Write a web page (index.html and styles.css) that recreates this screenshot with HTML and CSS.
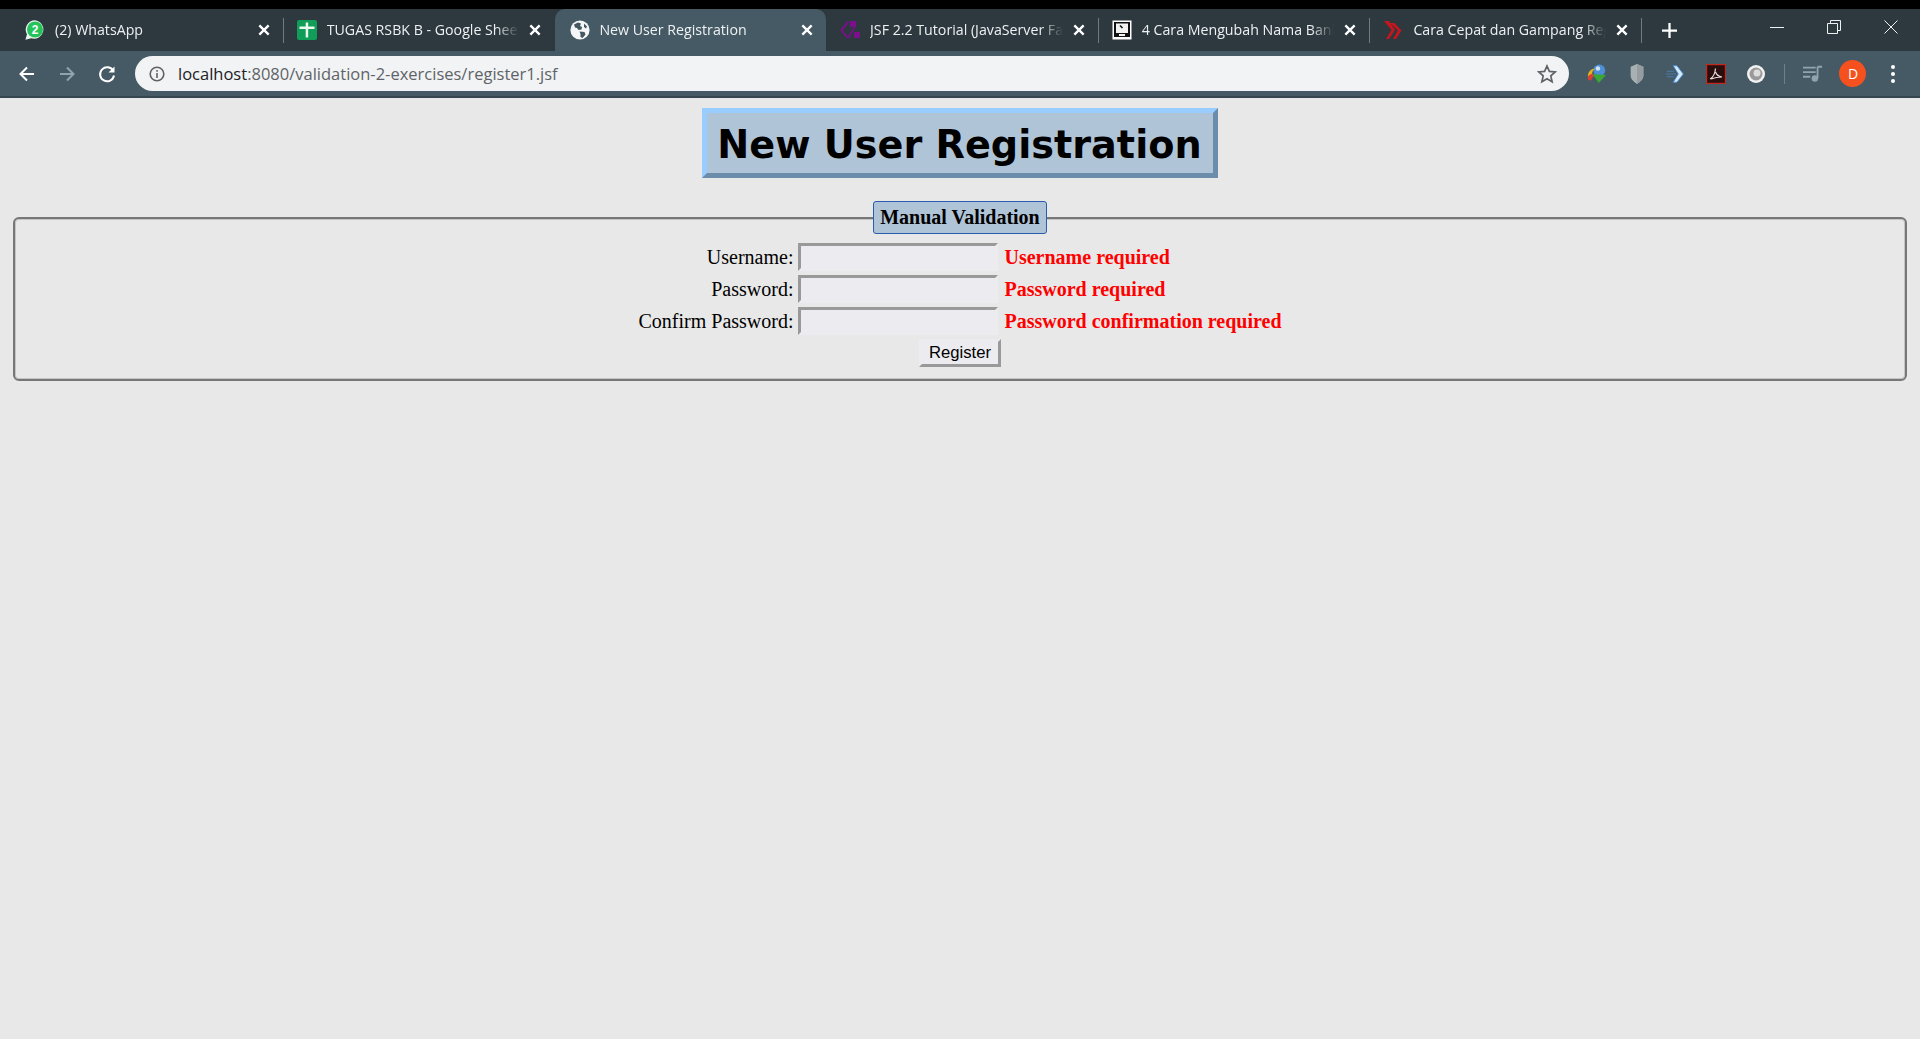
FILE: index.html
```html
<!DOCTYPE html>
<html lang="en">
<head>
    <meta charset="UTF-8">
    <title>New User Registration</title>
    <link rel="stylesheet" href="styles.css">
</head>
<body>
    <header class="browser">
        <div class="tab-strip">
            <div class="tab">
                <svg class="favicon" viewBox="0 0 20 20"><path d="M10 .2a9.300 9.300 0 0 0-8 14L.4 19.800l5.800-1.500A9.300 9.300 0 1 0 10 .2z" fill="#e8f5ec"/><circle cx="10" cy="9.500" r="8" fill="#25c45a"/><text x="10" y="14" text-anchor="middle" class="fav-num">2</text></svg>
                <span class="tab-title">(2) WhatsApp</span>
                <svg class="tab-close" viewBox="0 0 12 12"><path d="M2 2l8 8M10 2l-8 8"/></svg>
            </div>
            <i class="tab-sep"></i>
            <div class="tab">
                <svg class="favicon" viewBox="0 0 20 20"><rect width="20" height="20" rx="2" fill="#0f9d58"/><path d="M2.500 6.500h15v2.400h-15zM8.700 2.500h2.500v15H8.700z" fill="#eaf6ef"/></svg>
                <span class="tab-title">TUGAS RSBK B - Google Sheets</span>
                <svg class="tab-close" viewBox="0 0 12 12"><path d="M2 2l8 8M10 2l-8 8"/></svg>
            </div>
            <i class="tab-sep hidden"></i>
            <div class="tab active">
                <svg class="favicon" viewBox="0 0 20 20"><circle cx="10" cy="10" r="9.600" fill="#f4f6f7"/><path d="M4 4.500l4-2 3 1-1 2.500 2 1-.5 2.500-3 .5-1.500-2-2-.5zM9.500 11.500l5 .5 1 2.500-3 3.500-2-1v-3zM14 3.500l3 3-1 2-2-1.500z" fill="#44565f"/></svg>
                <span class="tab-title">New User Registration</span>
                <svg class="tab-close" viewBox="0 0 12 12"><path d="M2 2l8 8M10 2l-8 8"/></svg>
            </div>
            <i class="tab-sep hidden"></i>
            <div class="tab">
                <svg class="favicon" viewBox="0 0 20 20"><path d="M8.500 1.500L1.500 10l6 8" fill="none" stroke="#7b0f8c" stroke-width="2"/><path d="M15 7l-7 11" fill="none" stroke="#7b0f8c" stroke-width="1.600"/><rect x="10" y="1" width="6" height="6" fill="#7b0f8c"/><rect x="14" y="12" width="6" height="6" fill="#7b0f8c"/></svg>
                <span class="tab-title">JSF 2.2 Tutorial (JavaServer Faces)</span>
                <svg class="tab-close" viewBox="0 0 12 12"><path d="M2 2l8 8M10 2l-8 8"/></svg>
            </div>
            <i class="tab-sep"></i>
            <div class="tab">
                <svg class="favicon" viewBox="0 0 20 20"><rect x="0.500" y="0.500" width="19" height="19" fill="#fff"/><rect x="2" y="2" width="16" height="15" fill="#111"/><rect x="4" y="3.500" width="12" height="9.500" fill="#f2f2f2"/><path d="M8 5.500l2.500 2.500" stroke="#111" stroke-width="1.600"/><rect x="7" y="14" width="6" height="2" fill="#f2f2f2"/></svg>
                <span class="tab-title">4 Cara Mengubah Nama Bank di</span>
                <svg class="tab-close" viewBox="0 0 12 12"><path d="M2 2l8 8M10 2l-8 8"/></svg>
            </div>
            <i class="tab-sep"></i>
            <div class="tab">
                <svg class="favicon" viewBox="0 0 20 20"><path d="M1 1h5l6 9-6 9H3l5.500-9zM7 3h4.500l7 7.500-5.500 8.500h-3l5-8.500z" fill="#c4161c"/></svg>
                <span class="tab-title">Cara Cepat dan Gampang Registrasi</span>
                <svg class="tab-close" viewBox="0 0 12 12"><path d="M2 2l8 8M10 2l-8 8"/></svg>
            </div>
            <i class="tab-sep"></i>
            <svg class="new-tab" viewBox="0 0 16 16"><path d="M8 0v16M0 8h16"/></svg>
            <div class="window-controls">
                <svg viewBox="0 0 14 14"><path d="M0 7.500h14"/></svg>
                <svg viewBox="0 0 14 14"><path d="M.5 3.500h10v10H.5zM3.500 3.500v-3h10v10h-3"/></svg>
                <svg viewBox="0 0 14 14"><path d="M.5.5l13 13M13.500.5l-13 13"/></svg>
            </div>
        </div>
        <div class="toolbar">
            <svg class="nav-btn" viewBox="0 0 20 20"><path d="M17 10H4M10 3.500L3.500 10l6.500 6.500"/></svg>
            <svg class="nav-btn dim" viewBox="0 0 20 20"><path d="M3 10h13M10 3.500l6.500 6.500-6.500 6.500"/></svg>
            <svg class="nav-btn" viewBox="0 0 20 20"><path d="M16.300 7A7 7 0 1 0 17 11.500"/><path class="solid" d="M17.500 2.500v6h-6z"/></svg>
            <div class="omnibox">
                <svg class="info-icon" viewBox="0 0 16 16"><circle cx="8" cy="8" r="6.800"/><path d="M8 7v5M8 4v1.800"/></svg>
                <span class="url"><b>localhost</b>:8080/validation-2-exercises/register1.jsf</span>
                <svg class="star-icon" viewBox="0 0 20 20"><path d="M10 2l2.400 5.400 5.800.6-4.400 3.900 1.300 5.800L10 14.700l-5.100 3 1.300-5.800L1.800 8l5.800-.6z"/></svg>
            </div>
            <div class="extensions">
                <div class="ext"><svg viewBox="0 0 22 22"><circle cx="13.500" cy="7" r="6.500" fill="#4d8fd6"/><circle cx="12" cy="5" r="2.500" fill="#cfe3f5"/><path d="M1 14c0-6 4-9 8-9-3 2-4 5-3 7z" fill="#e8b21f"/><path d="M1.500 18c-1.500-4 1-7 4.500-7l2 3c-2 0-3 1.500-3 4z" fill="#d9402f"/><path d="M6 11l15 1-8 9z" fill="#3aa635"/></svg></div>
                <div class="ext"><svg viewBox="0 0 22 22"><path d="M11 0l7 3v10c0 4-4 7-7 9-3-2-7-5-7-9V3z" fill="#a9b0b3"/><path d="M11 0l7 3v10c0 4-4 7-7 9z" fill="#969da0"/></svg></div>
                <div class="ext"><svg viewBox="0 0 22 22"><path d="M8 2h4l7 9-7 9H8l5.500-9z" fill="#d6ebff" stroke="#4a90d9"/><path d="M1 8h8M0 11h11M1 14h8" stroke="#4a7fae" stroke-width="1"/></svg></div>
                <div class="ext"><svg viewBox="0 0 20 20"><rect x=".6" y=".6" width="18.800" height="18.800" fill="#2a0e0e" stroke="#c4281c" stroke-width="1.200"/><path d="M4 15c3-1.500 5-5 5.500-10.500M9.500 8c1 3 3 4.500 6.500 5-3.500 0-7 .5-11 2" fill="none" stroke="#e5dcdc" stroke-width="1.200"/></svg></div>
                <div class="ext"><svg viewBox="0 0 20 20"><circle cx="10" cy="10" r="9" fill="#f2f2f2"/><circle cx="10" cy="10" r="6.500" fill="#9a9a9a"/><circle cx="11" cy="9" r="3.500" fill="#dcdcdc"/></svg></div>
            </div>
            <i class="toolbar-sep"></i>
            <div class="ext"><svg viewBox="0 0 22 20"><path d="M0 3h14M0 8h14M0 13h8" fill="none" stroke="#90a4ae" stroke-width="2"/><path d="M16 2h5M16 2v13" fill="none" stroke="#90a4ae" stroke-width="2"/><circle cx="13" cy="15" r="3.500" fill="#90a4ae"/></svg></div>
            <div class="ext"><span class="avatar">D</span></div>
            <div class="ext menu-dots"><i></i><i></i><i></i></div>
        </div>
    </header>

    <main class="page">
        <h1 class="title">New User Registration</h1>
        <form>
            <fieldset class="panel">
                <legend class="panel-legend">Manual Validation</legend>
                <table class="form-table">
                    <tr>
                        <td class="field-label">Username:</td>
                        <td><input class="field-input" type="text"></td>
                        <td class="field-error">Username required</td>
                    </tr>
                    <tr>
                        <td class="field-label">Password:</td>
                        <td><input class="field-input" type="password"></td>
                        <td class="field-error">Password required</td>
                    </tr>
                    <tr>
                        <td class="field-label">Confirm Password:</td>
                        <td><input class="field-input" type="password"></td>
                        <td class="field-error">Password confirmation required</td>
                    </tr>
                    <tr>
                        <td class="submit-cell" colspan="3"><button class="submit-btn" type="button">Register</button></td>
                    </tr>
                </table>
            </fieldset>
        </form>
    </main>
</body>
</html>
```

FILE: styles.css
```css
html, body {
    height: 100%;
}

body {
    margin: 0;
    background-color: #e8e8e8;
    overflow: hidden;
}

/* browser frame */
.browser {
    background-color: #000;
    padding-top: 9px;
    font-family: "Open Sans", sans-serif;
}

.tab-strip {
    display: flex;
    align-items: center;
    height: 42px;
    padding-left: 12px;
    background-color: #2d383f;
}

.tab {
    position: relative;
    display: flex;
    align-items: center;
    flex: none;
    box-sizing: border-box;
    width: 270.7px;
    height: 42px;
    padding: 0 12px 0 13px;
    color: #eef1f3;
    font-size: 14.2px;
}

.tab.active {
    padding-left: 15px;
    background-color: #455a64;
    border-radius: 10px 10px 0 0;
}

.favicon {
    flex: none;
    width: 20px;
    height: 20px;
}

.fav-num {
    fill: #fff;
    font-family: "Liberation Sans", sans-serif;
    font-size: 12px;
    font-weight: 700;
}

.tab-title {
    flex: 1;
    margin: 0 9px 2px 10px;
    overflow: hidden;
    white-space: nowrap;
    -webkit-mask-image: linear-gradient(to right, #000 88%, transparent 100%);
    mask-image: linear-gradient(to right, #000 88%, transparent 100%);
}

.active .tab-title {
    margin-left: 9px;
}

.tab-close {
    flex: none;
    width: 14px;
    height: 14px;
    fill: none;
    stroke: #fff;
    stroke-width: 2;
}

.tab-sep {
    flex: none;
    width: 1px;
    height: 25px;
    background-color: #6d7c84;
}

.tab-sep.hidden {
    background-color: transparent;
}

.new-tab {
    flex: none;
    width: 15px;
    height: 15px;
    margin-left: 20px;
    fill: none;
    stroke: #fff;
    stroke-width: 2.4;
}

.window-controls {
    display: flex;
    align-self: flex-start;
    align-items: center;
    gap: 1px;
    height: 36px;
    margin-left: auto;
    padding-right: 1px;
}

.window-controls svg {
    box-sizing: content-box;
    width: 14px;
    height: 14px;
    padding: 0 21px;
    fill: none;
    stroke: #eef1f3;
    stroke-width: 1;
}

.toolbar {
    display: flex;
    align-items: center;
    box-sizing: border-box;
    height: 47px;
    padding-left: 17px;
    background-color: #455a64;
    border-bottom: 2px solid #36464e;
}

.nav-btn {
    flex: none;
    width: 20px;
    height: 20px;
    margin-right: 20px;
    fill: none;
    stroke: #fff;
    stroke-width: 2;
}

.nav-btn.dim {
    stroke: #90a4ae;
}

.nav-btn .solid {
    fill: #fff;
    stroke: none;
}

.omnibox {
    display: flex;
    align-items: center;
    flex: none;
    box-sizing: border-box;
    width: 1434px;
    height: 35px;
    margin-left: -2px;
    padding: 0 12px;
    background-color: #f1f3f4;
    border-radius: 18px;
}

.info-icon {
    flex: none;
    width: 16px;
    height: 16px;
    margin-left: 2px;
    fill: none;
    stroke: #5f6368;
    stroke-width: 1.600;
}

.url {
    flex: 1;
    margin-left: 13px;
    color: #5f6368;
    font-size: 16.500px;
}

.url b {
    color: #202124;
    font-weight: 400;
}

.star-icon {
    flex: none;
    width: 20px;
    height: 20px;
    fill: none;
    stroke: #5f6368;
    stroke-width: 1.700;
}

.extensions {
    display: flex;
    margin-left: 8px;
}

.ext {
    display: flex;
    align-items: center;
    justify-content: center;
    flex: none;
    width: 39.700px;
    height: 40px;
}

.ext svg {
    width: 20px;
    height: 20px;
}

.toolbar-sep {
    flex: none;
    width: 1px;
    height: 20px;
    margin: 0 8px 0 9px;
    background-color: #6d8088;
}

.avatar {
    display: flex;
    align-items: center;
    justify-content: center;
    width: 27px;
    height: 27px;
    border-radius: 50%;
    background-color: #f4511e;
    color: #fff;
    font-size: 14px;
}

.menu-dots {
    flex-direction: column;
    gap: 3px;
}

.menu-dots i {
    width: 4px;
    height: 4px;
    border-radius: 50%;
    background-color: #fff;
}

/* page content */
.page {
    padding: 10px 13px 0;
    font-family: "Liberation Serif", "Times New Roman", serif;
    font-size: 20px;
    color: #000;
    text-align: center;
}

.title {
    display: table;
    margin: 0 auto 23px;
    padding: 10px 11px 6px 10px;
    background-color: #b0c4d8;
    border: 5px solid;
    border-color: #99ccff #6c8cab #6c8cab #99ccff;
    font-family: "DejaVu Sans", Verdana, sans-serif;
    font-size: 38.200px;
    font-weight: 700;
    line-height: 44px;
}

.panel {
    margin: 0;
    padding: 5px 0 8px;
    border: 2px solid #777;
    border-radius: 6px;
    box-shadow: inset 0 0 0 1px #c4c4c4;
}

.panel-legend {
    box-sizing: border-box;
    margin: 0 auto;
    padding: 2px 6px;
    background-color: #b0c4d8;
    border: 1px solid #2a5db0;
    border-radius: 3px;
    font-weight: 700;
    line-height: 27px;
}

.form-table {
    margin: 0 auto;
    border-collapse: separate;
    border-spacing: 0 4px;
}

.form-table td {
    padding: 0;
}

.form-table .field-label {
    padding-right: 5px;
    text-align: right;
}

.field-input {
    display: block;
    box-sizing: border-box;
    width: 200px;
    height: 28px;
    padding: 0 4px;
    background-color: #ececf0;
    border: 3px solid;
    border-color: #999 #ececf0 #ececf0 #999;
}

.form-table .field-error {
    padding-left: 6px;
    color: #f00;
    font-weight: 700;
    text-align: left;
}

.submit-cell {
    text-align: center;
}

.submit-btn {
    box-sizing: border-box;
    width: 82px;
    height: 28px;
    padding: 0;
    background-color: #ececf0;
    border: 3px solid;
    border-color: #ececf0 #999 #999 #ececf0;
    font-family: "Liberation Sans", Arial, sans-serif;
    font-size: 16.670px;
}
```
